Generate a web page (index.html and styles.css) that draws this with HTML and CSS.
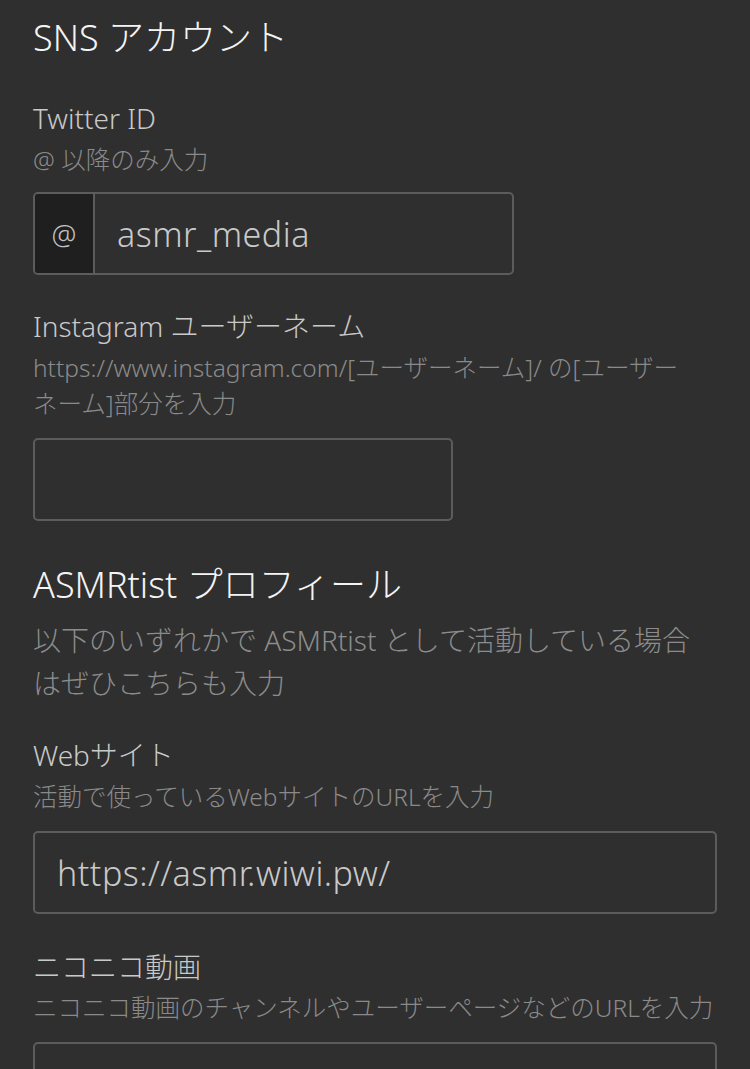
FILE: index.html
```html
<!DOCTYPE html>
<html lang="ja">
<head>
<meta charset="utf-8">
<title>SNS アカウント</title>
<link rel="stylesheet" href="styles.css">
</head>
<body>
<main class="form">
  <h2 class="section-title">SNS アカウント</h2>

  <div class="field">
    <label class="field-label">Twitter ID</label>
    <p class="field-help">@ 以降のみ入力</p>
    <div class="input-group input-twitter">
      <span class="addon">@</span>
      <span class="input-value">asmr_media</span>
    </div>
  </div>

  <div class="field field-instagram">
    <label class="field-label">Instagram ユーザーネーム</label>
    <p class="field-help">https://www.instagram.com/[ユーザーネーム]/ の[ユーザー<span class="keep">ネーム]</span>部分を入力</p>
    <div class="input-box input-instagram"></div>
  </div>

  <h2 class="section-title second">ASMRtist プロフィール</h2>
  <p class="section-desc">以下のいずれかで ASMRtist として活動している場合はぜひこちらも入力</p>

  <div class="field field-web">
    <label class="field-label">Webサイト</label>
    <p class="field-help">活動で使っているWebサイトのURLを入力</p>
    <div class="input-box input-full"><span class="input-value">https://asmr.wiwi.pw/</span></div>
  </div>

  <div class="field field-nico">
    <label class="field-label">ニコニコ動画</label>
    <p class="field-help">ニコニコ動画のチャンネルやユーザーページなどのURLを入力</p>
    <div class="input-box input-full"></div>
  </div>
</main>
</body>
</html>
```

FILE: styles.css
```css
html, body {
  margin: 0;
  padding: 0;
  background: #2f2f2f;
}

body {
  font-family: "Noto Sans", "Noto Sans CJK JP", sans-serif;
  font-weight: 300;
  color: #c9c9c9;
  text-autospace: no-autospace;
}

.form {
  padding: 13px 33px 0 33px;
}

.section-title {
  margin: 0;
  font-size: 36px;
  line-height: 50px;
  font-weight: 300;
  color: #f4f4f4;
}

.section-title.second {
  margin-top: 39px;
}

.section-desc {
  margin: 9px 0 0 0;
  font-size: 28px;
  line-height: 43px;
  color: #8c8c8c;
}

.field {
  margin-top: 35px;
}

.field-instagram {
  margin-top: 31px;
}

.field-web {
  margin-top: 30px;
}

.field-nico {
  margin-top: 33px;
}

.field-label {
  display: block;
  font-size: 28px;
  line-height: 40px;
  color: #c9c9c9;
}

.field-help {
  margin: 4px 0 0 0;
  font-size: 24.5px;
  line-height: 36px;
  color: #8a8a8a;
}

.field-nico .field-help {
  margin-top: 3px;
}

.keep {
  white-space: nowrap;
}

.input-group,
.input-box {
  margin-top: 16px;
  height: 83px;
  box-sizing: border-box;
  border: 2px solid #5c5c5c;
  border-radius: 5px;
  display: flex;
  align-items: center;
}

.input-twitter {
  margin-top: 14px;
  width: 481px;
  overflow: hidden;
}

.addon {
  align-self: stretch;
  width: 58px;
  background: #1f1f1f;
  border-right: 2px solid #5c5c5c;
  display: flex;
  align-items: center;
  justify-content: center;
  font-size: 28px;
  color: #c2c2c2;
}

.input-value {
  padding-left: 22px;
  font-size: 34px;
  letter-spacing: 0.5px;
  color: #c9c9c9;
}

.input-instagram {
  width: 420px;
}

.input-full {
  width: 100%;
}
```
